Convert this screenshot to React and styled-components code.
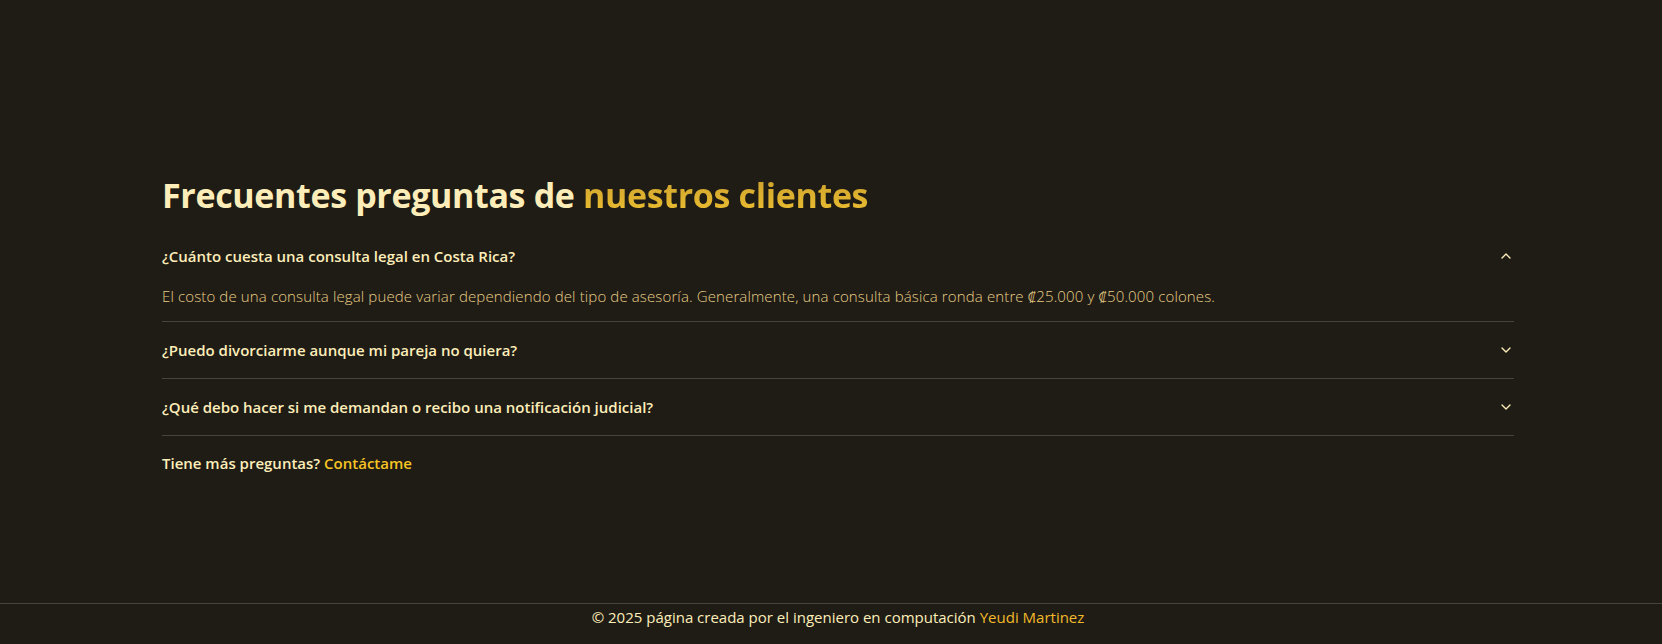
import React, { useState } from 'react';
import styled, { createGlobalStyle } from 'styled-components';
import { ChevronDown, ChevronUp } from 'lucide-react';

const GlobalStyle = createGlobalStyle`
  html, body {
    margin: 0;
    padding: 0;
    background: #1f1c16;
  }
  body {
    font-family: 'Open Sans', 'Noto Sans', sans-serif;
    color: #fdeeb9;
  }
`;

const faqs = [
  {
    q: '¿Cuánto cuesta una consulta legal en Costa Rica?',
    a: 'El costo de una consulta legal puede variar dependiendo del tipo de asesoría. Generalmente, una consulta básica ronda entre ₡25.000 y ₡50.000 colones.',
  },
  {
    q: '¿Puedo divorciarme aunque mi pareja no quiera?',
    a: 'Sí. En Costa Rica existe el divorcio por causal, que puede solicitarse aunque la otra parte no esté de acuerdo.',
  },
  {
    q: '¿Qué debo hacer si me demandan o recibo una notificación judicial?',
    a: 'Lo primero es no ignorarla. Busque asesoría legal de inmediato para conocer los plazos y preparar su defensa.',
  },
];

const App = () => {
  const [open, setOpen] = useState(0);

  return (
    <Page>
      <GlobalStyle />
      <Section>
        <Title>
          Frecuentes preguntas de <Highlight>nuestros clientes</Highlight>
        </Title>

        <List>
          {faqs.map((item, index) => (
            <Item key={index}>
              <Question onClick={() => setOpen(open === index ? -1 : index)}>
                <span>{item.q}</span>
                {open === index ? <ChevronUp size={16} /> : <ChevronDown size={16} />}
              </Question>
              {open === index && <Answer>{item.a}</Answer>}
            </Item>
          ))}
        </List>

        <More>
          Tiene más preguntas? <MoreLink href="#">Contáctame</MoreLink>
        </More>
      </Section>

      <Footer>
        © 2025 página creada por el ingeniero en computación <FooterName>Yeudi Martinez</FooterName>
      </Footer>
    </Page>
  );
};

export default App;

const Page = styled.div`
  min-height: 644px;
  display: flex;
  flex-direction: column;
`;

const Section = styled.section`
  width: 1352px;
  margin-left: 162px;
  padding-top: 175px;
  flex: 1;
`;

const Title = styled.h2`
  margin: 0 0 13px;
  font-size: 34px;
  line-height: 40px;
  font-weight: 700;
  color: #fdeeb9;
  letter-spacing: -0.35px;
`;

const Highlight = styled.span`
  background: linear-gradient(180deg, #c89d2c 0%, #f0c232 100%);
  -webkit-background-clip: text;
  background-clip: text;
  color: transparent;
`;

const List = styled.div`
  display: flex;
  flex-direction: column;
`;

const Item = styled.div`
  border-bottom: 1px solid #46433d;
`;

const Question = styled.button`
  width: 100%;
  display: flex;
  align-items: center;
  justify-content: space-between;
  padding: 16px 0;
  background: none;
  border: none;
  color: #fdeeb9;
  font-family: inherit;
  font-size: 15px;
  line-height: 24px;
  font-weight: 600;
  text-align: left;
  cursor: pointer;

  svg {
    flex-shrink: 0;
    color: #fdeeb9;
  }
`;

const Answer = styled.p`
  margin: 0;
  padding: 0 0 13px;
  font-size: 15px;
  line-height: 24px;
  font-weight: 300;
  letter-spacing: 0.13px;
  color: #e8cd85;
`;

const More = styled.p`
  margin: 15px 0 0;
  font-size: 15px;
  line-height: 24px;
  font-weight: 600;
  color: #fdeeb9;
`;

const MoreLink = styled.a`
  color: #f6c423;
  text-decoration: none;
`;

const Footer = styled.footer`
  border-top: 1px solid #46433d;
  padding: 1px 0 15px 14px;
  text-align: center;
  font-size: 15px;
  line-height: 24px;
  font-weight: 400;
  color: #fdeeb9;
`;

const FooterName = styled.span`
  color: #f2b92a;
`;
